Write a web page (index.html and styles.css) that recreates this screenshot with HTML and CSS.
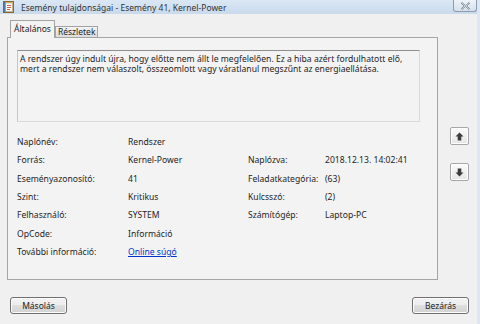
FILE: index.html
```html
<!DOCTYPE html>
<html lang="hu">
<head>
    <meta charset="UTF-8">
    <meta name="viewport" content="width=device-width, initial-scale=1.0">
    <title>Esemény tulajdonságai</title>
    <link rel="stylesheet" href="styles.css">
</head>
<body>
    <div class="window">
        <div class="titlebar">
            <svg class="app-icon" width="11" height="12" viewBox="0 0 11 12">
                <rect x="0.5" y="0.5" width="10" height="11" fill="#e9b649" stroke="#8a6a2a"/>
                <rect x="2.5" y="2" width="7" height="8.5" fill="#fbfbf4" stroke="#9a9a9a" stroke-width="0.6"/>
                <rect x="1" y="1" width="1.3" height="10" fill="#4a78b8"/>
                <path d="M4 4.5h4M4 6.5h4M4 8.5h3" stroke="#c04020" stroke-width="0.8"/>
            </svg>
            <span class="title">Esemény tulajdonságai - Esemény 41, Kernel-Power</span>
            <div class="close">
                <svg width="9" height="8" viewBox="0 0 9 8">
                    <path d="M1 0.5l3.5 3 3.5-3 0.8 0.8-3 2.7 3 2.7-0.8 0.8-3.5-3-3.5 3-0.8-0.8 3-2.7-3-2.7z" fill="#f4f6f9" stroke="#59667a" stroke-width="0.7"/>
                </svg>
            </div>
        </div>

        <div class="tabs">
            <div class="tab active">Általános</div>
            <div class="tab">Részletek</div>
        </div>

        <div class="main">
            <div class="panel">
                <div class="desc">A rendszer úgy indult újra, hogy előtte nem állt le megfelelően. Ez a hiba azért fordulhatott elő, mert a rendszer nem válaszolt, összeomlott vagy váratlanul megszűnt az energiaellátása.</div>

                <div class="fields">
                    <span>Naplónév:</span><span>Rendszer</span><span></span><span></span>
                    <span>Forrás:</span><span>Kernel-Power</span><span>Naplózva:</span><span>2018.12.13. 14:02:41</span>
                    <span>Eseményazonosító:</span><span>41</span><span>Feladatkategória:</span><span>(63)</span>
                    <span>Szint:</span><span>Kritikus</span><span>Kulcsszó:</span><span>(2)</span>
                    <span>Felhasználó:</span><span>SYSTEM</span><span>Számítógép:</span><span>Laptop-PC</span>
                    <span>OpCode:</span><span>Információ</span><span></span><span></span>
                    <span>További információ:</span><span><a class="link" href="#">Online súgó</a></span><span></span><span></span>
                </div>
            </div>

            <div class="side">
                <div class="arrow-btn">
                    <svg width="9" height="9" viewBox="0 0 9 9"><path d="M4.5 0.5L8.5 4.5H6.3V8.5H2.7V4.5H0.5Z" fill="#3c3c3c"/></svg>
                </div>
                <div class="arrow-btn">
                    <svg width="9" height="9" viewBox="0 0 9 9"><path d="M4.5 8.5L8.5 4.5H6.3V0.5H2.7V4.5H0.5Z" fill="#3c3c3c"/></svg>
                </div>
            </div>
        </div>

        <div class="footer">
            <button class="btn">Másolás</button>
            <button class="btn">Bezárás</button>
        </div>
    </div>
</body>
</html>
```

FILE: styles.css
```css
body { margin: 0; font-family: "Noto Sans", "Open Sans", sans-serif; font-size: 8.6px; color: #1e1e1e; background-color: #f0f0f0; }
.window { width: 480px; height: 324px; overflow: hidden; box-sizing: border-box; border-right: 3px solid #dce7f3; }

.titlebar { height: 14px; display: flex; align-items: center; padding-left: 3px; background: linear-gradient(#dbe7f4, #c9daec); }
.app-icon { flex: none; }
.title { margin-left: 7px; font-size: 8.5px; color: #333; }
.close { margin-left: auto; align-self: flex-start; width: 24px; height: 12px; box-sizing: border-box; display: flex; align-items: center; justify-content: center; border: 1px solid #8c9bb1; border-top: none; border-radius: 0 0 3px 3px; background: linear-gradient(#eef3f9, #d6e0ec); }

.tabs { display: flex; align-items: flex-end; height: 17px; margin-top: 6px; padding-left: 10px; }
.tab { height: 11px; line-height: 10px; padding: 0 2px; border: 1px solid #a3a3a3; border-bottom: none; background: linear-gradient(#f4f4f4, #dcdcdc); box-sizing: border-box; font-size: 8.5px; }
.tab.active { height: 18px; line-height: 16px; margin-bottom: -1px; padding: 0 3px; background: #f3f3f3; position: relative; z-index: 1; }

.main { display: flex; }
.panel { margin-left: 7px; width: 404px; height: 229px; padding: 12px 16px 0 9px; border: 1px solid #a5a5a5; background: #f3f3f3; }
.desc { width: 397px; height: 64px; padding: 3px 2px; line-height: 10px; border: 1px solid #dadada; border-top-color: #8e8e8e; border-left-color: #c6c6c6; }

.fields { display: grid; grid-template-columns: 111px 120px 77px auto; grid-auto-rows: 18.33px; align-items: center; margin-top: 11px; }
.link { color: #0033cc; text-decoration: underline; }

.side { padding-top: 90px; margin-left: 12px; display: flex; flex-direction: column; gap: 18px; }
.arrow-btn { width: 19px; height: 18px; box-sizing: border-box; display: flex; align-items: center; justify-content: center; border: 1px solid #a7a7a7; border-radius: 2px; background: linear-gradient(#fbfbfb, #e6e6e6); box-shadow: inset 0 0 0 1px #ffffff; }

.footer { display: flex; justify-content: space-between; padding: 17px 8px 0 10px; }
.btn { width: 57px; height: 17px; padding: 0; font-family: inherit; font-size: 8.5px; color: #1e1e1e; border: 1px solid #707070; border-radius: 3px; background: linear-gradient(#f3f3f3, #ececec 50%, #dedede 50%, #d2d2d2); box-shadow: inset 0 0 0 1px #fcfcfc; }
```
